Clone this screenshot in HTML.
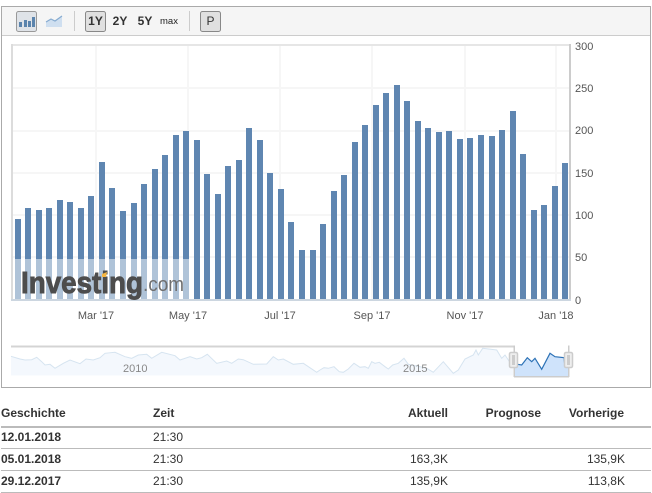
<!DOCTYPE html>
<html lang="de">
<head>
<meta charset="utf-8">
<title>Chart</title>
<style>
html,body{margin:0;padding:0;background:#fff;width:652px;height:493px;overflow:hidden}
svg{position:absolute;left:0;top:0;display:block}
text{font-family:"Liberation Sans",Arial,sans-serif}
.ax{font-size:11px;fill:#555}
.h{font-size:12px;font-weight:bold;fill:#333}
.d{font-size:12px;fill:#333}
.b{font-size:12px;font-weight:bold;fill:#333}
</style>
</head>
<body>
<svg width="652" height="493" viewBox="0 0 652 493" xmlns="http://www.w3.org/2000/svg">
<!-- frame -->
<rect x="1.5" y="6.5" width="649" height="381" fill="#fff" stroke="#aaa"/>
<rect x="2" y="7" width="648" height="28" fill="#f5f5f5"/>
<rect x="2" y="35" width="648" height="1" fill="#ccc"/>

<!-- toolbar -->
<rect x="16.5" y="11.5" width="20" height="20" rx="2" fill="#dfe3e8" stroke="#999"/>
<path d="M19 22h3v5h-3zM24 20h3v7h-3zM28 21h3v6h-3zM32 17h3v10h-3z" fill="#5b84ad"/>
<path d="M46 27v-5l5-3 4 2 7-5v11z" fill="#cfdff0"/>
<path d="M46 22l5-3 4 2 7-5" fill="none" stroke="#86abd0" stroke-width="1.2"/>
<rect x="74" y="11" width="1" height="20" fill="#ccc"/>
<rect x="85.5" y="11.5" width="20" height="20" rx="2" fill="#e0e0e0" stroke="#888"/>
<text x="95.5" y="25" text-anchor="middle" class="b">1Y</text>
<text x="120" y="25" text-anchor="middle" class="b">2Y</text>
<text x="145" y="25" text-anchor="middle" class="b">5Y</text>
<text x="169" y="24" text-anchor="middle" font-size="9.5" fill="#222">max</text>
<rect x="189" y="11" width="1" height="20" fill="#ccc"/>
<rect x="200.5" y="11.5" width="20" height="20" rx="2" fill="#e0e0e0" stroke="#888"/>
<text x="210.5" y="25" text-anchor="middle" class="d">P</text>

<!-- grid -->
<g fill="#f6f6f6">
<rect x="12" y="87" width="557" height="2"/><rect x="12" y="130" width="557" height="2"/>
<rect x="12" y="172" width="557" height="2"/><rect x="12" y="214" width="557" height="2"/>
<rect x="12" y="256" width="557" height="2"/>
<rect x="95" y="46" width="2" height="254"/><rect x="187" y="46" width="2" height="254"/>
<rect x="279" y="46" width="2" height="254"/><rect x="371" y="46" width="2" height="254"/>
<rect x="464" y="46" width="2" height="254"/><rect x="555" y="46" width="2" height="254"/>
</g>
<rect x="11" y="44" width="559" height="2" fill="#e6e6e6"/>
<rect x="11" y="44" width="2" height="257" fill="#dcdcdc"/>
<rect x="569" y="44" width="2" height="257" fill="#ccc"/>
<rect x="11" y="299" width="560" height="2" fill="#ccd6e0"/>

<!-- bars -->
<g fill="#5f86b1">
<rect x="15" y="219" width="6" height="80"/><rect x="25" y="208" width="6" height="91"/>
<rect x="36" y="210" width="6" height="89"/><rect x="46" y="208" width="6" height="91"/>
<rect x="57" y="200" width="6" height="99"/><rect x="67" y="202" width="6" height="97"/>
<rect x="78" y="208" width="6" height="91"/><rect x="88" y="196" width="6" height="103"/>
<rect x="99" y="162" width="6" height="137"/><rect x="109" y="188" width="6" height="111"/>
<rect x="120" y="211" width="6" height="88"/><rect x="131" y="203" width="6" height="96"/>
<rect x="141" y="184" width="6" height="115"/><rect x="152" y="169" width="6" height="130"/>
<rect x="162" y="155" width="6" height="144"/><rect x="173" y="135" width="6" height="164"/>
<rect x="183" y="131" width="6" height="168"/><rect x="194" y="140" width="6" height="159"/>
<rect x="204" y="174" width="6" height="125"/><rect x="215" y="194" width="6" height="105"/>
<rect x="225" y="166" width="6" height="133"/><rect x="236" y="160" width="6" height="139"/>
<rect x="246" y="128" width="6" height="171"/><rect x="257" y="140" width="6" height="159"/>
<rect x="267" y="173" width="6" height="126"/><rect x="278" y="189" width="6" height="110"/>
<rect x="288" y="222" width="6" height="77"/><rect x="299" y="250" width="6" height="49"/>
<rect x="310" y="250" width="6" height="49"/><rect x="320" y="224" width="6" height="75"/>
<rect x="331" y="191" width="6" height="108"/><rect x="341" y="175" width="6" height="124"/>
<rect x="352" y="142" width="6" height="157"/><rect x="362" y="125" width="6" height="174"/>
<rect x="373" y="105" width="6" height="194"/><rect x="383" y="93" width="6" height="206"/>
<rect x="394" y="85" width="6" height="214"/><rect x="404" y="101" width="6" height="198"/>
<rect x="415" y="121" width="6" height="178"/><rect x="425" y="128" width="6" height="171"/>
<rect x="436" y="132" width="6" height="167"/><rect x="446" y="131" width="6" height="168"/>
<rect x="457" y="139" width="6" height="160"/><rect x="467" y="138" width="6" height="161"/>
<rect x="478" y="135" width="6" height="164"/><rect x="489" y="136" width="6" height="163"/>
<rect x="499" y="130" width="6" height="169"/><rect x="510" y="111" width="6" height="188"/>
<rect x="520" y="154" width="6" height="145"/><rect x="531" y="210" width="6" height="89"/>
<rect x="541" y="205" width="6" height="94"/><rect x="552" y="186" width="6" height="113"/>
<rect x="562" y="163" width="6" height="136"/>
</g>

<!-- watermark -->
<rect x="13" y="259" width="176" height="40" fill="#fff" fill-opacity=".5"/>
<text x="21" y="293" font-size="31" font-weight="bold" fill="#4d4d4d" stroke="#4d4d4d" stroke-width=".9" textLength="122" lengthAdjust="spacingAndGlyphs">Investing</text>
<text x="143" y="291" font-size="20" fill="#6f6f6f" textLength="41" lengthAdjust="spacingAndGlyphs">.com</text>
<path d="M102 274l5-2-1 5-4 0z" fill="#f5b642"/>

<!-- y axis -->
<text class="ax" x="575" y="50">300</text><text class="ax" x="575" y="92">250</text>
<text class="ax" x="575" y="134">200</text><text class="ax" x="575" y="177">150</text>
<text class="ax" x="575" y="219">100</text><text class="ax" x="575" y="261">50</text>
<text class="ax" x="575" y="304">0</text>
<!-- x axis -->
<text class="ax" x="96" y="319" text-anchor="middle">Mar '17</text>
<text class="ax" x="188" y="319" text-anchor="middle">May '17</text>
<text class="ax" x="280" y="319" text-anchor="middle">Jul '17</text>
<text class="ax" x="372" y="319" text-anchor="middle">Sep '17</text>
<text class="ax" x="465" y="319" text-anchor="middle">Nov '17</text>
<text class="ax" x="556" y="319" text-anchor="middle">Jan '18</text>

<!-- navigator -->
<rect x="11" y="345.5" width="503" height="2" fill="#d4d4d4"/>
<path d="M11 356.3L20 359L25 360L31.7 359.7L36.7 357.3L41.7 361.7L45 365L50 364.3L55 368.3L63.3 363.3L70 360L80 363.7L86 359L93.3 360L100 357.7L105 353.3L115 352.3L125 356.7L131.7 358.3L138.3 355L146.7 354.3L151.7 358.3L161.7 352.3L175 355.7L180 360L190 356.7L196.7 359L201.7 357.7L207.3 354.3L216.7 363.3L226.7 361L231.7 363.3L238.3 359L243.3 359.7L253.3 364.3L266.7 364L273.3 356.7L278.3 360L283.3 359L293.3 364.3L303.3 363.3L316.7 372.3L320 370L324 367.7L328.3 368.3L334 366.7L339.3 371.7L343.3 372.3L348.3 369L354 363.3L360 367.3L365 366.7L368.3 368.3L371.7 361.7L375 363.3L379.3 362.3L385 366.7L388.3 369L392.7 365L398.3 363.3L404 358.3L408.3 364.3L420 366.7L426.7 368.3L433.3 372.3L443.3 361.7L453.3 373.3L458.3 370L465 359L473.3 355L476 350L478.3 355L482.7 348.3L496.7 350L501.7 358.3L505 355L513 367V375.5H11Z" fill="#f4f8fd"/>
<path d="M11 356.3L20 359L25 360L31.7 359.7L36.7 357.3L41.7 361.7L45 365L50 364.3L55 368.3L63.3 363.3L70 360L80 363.7L86 359L93.3 360L100 357.7L105 353.3L115 352.3L125 356.7L131.7 358.3L138.3 355L146.7 354.3L151.7 358.3L161.7 352.3L175 355.7L180 360L190 356.7L196.7 359L201.7 357.7L207.3 354.3L216.7 363.3L226.7 361L231.7 363.3L238.3 359L243.3 359.7L253.3 364.3L266.7 364L273.3 356.7L278.3 360L283.3 359L293.3 364.3L303.3 363.3L316.7 372.3L320 370L324 367.7L328.3 368.3L334 366.7L339.3 371.7L343.3 372.3L348.3 369L354 363.3L360 367.3L365 366.7L368.3 368.3L371.7 361.7L375 363.3L379.3 362.3L385 366.7L388.3 369L392.7 365L398.3 363.3L404 358.3L408.3 364.3L420 366.7L426.7 368.3L433.3 372.3L443.3 361.7L453.3 373.3L458.3 370L465 359L473.3 355L476 350L478.3 355L482.7 348.3L496.7 350L501.7 358.3L505 355L513 367" fill="none" stroke="#d6e4f0" stroke-width="1"/>
<text x="123" y="372" font-size="11" fill="#888">2010</text>
<text x="403" y="372" font-size="11" fill="#888">2015</text>
<path d="M514 364.3L517.3 364.3L521.7 365L527.3 357.7L531.7 361.7L535 358.3L541.7 369.3L550 353.3L555 356.7L564 357.7L569 367V376H514Z" fill="#cfe3fb"/>
<path d="M517.3 364.3L521.7 365L527.3 357.7L531.7 361.7L535 358.3L541.7 369.3L550 353.3L555 356.7L564 357.7L565 367" fill="none" stroke="#2d72b6" stroke-width="1.2"/>
<rect x="513.5" y="345.5" width="1.5" height="31.5" fill="#ccc"/>
<rect x="568" y="345.5" width="1.5" height="31.5" fill="#ccc"/>
<rect x="514" y="376" width="55" height="1.5" fill="#ccc"/>
<rect x="509.5" y="352.5" width="8" height="15" rx="1.5" fill="#eee" stroke="#ccc" stroke-width="1.5"/>
<rect x="512" y="355" width="3" height="10" fill="#ccc"/>
<rect x="564.5" y="352.5" width="8" height="15" rx="1.5" fill="#eee" stroke="#ccc" stroke-width="1.5"/>
<rect x="567" y="355" width="3" height="10" fill="#ccc"/>

<!-- table -->
<text class="h" x="1" y="417">Geschichte</text>
<text class="h" x="153" y="417">Zeit</text>
<text class="h" x="448" y="417" text-anchor="end">Aktuell</text>
<text class="h" x="541" y="417" text-anchor="end">Prognose</text>
<text class="h" x="624" y="417" text-anchor="end">Vorherige</text>
<rect x="1" y="426" width="650" height="2" fill="#bbb"/>
<text class="b" x="1" y="441">12.01.2018</text>
<text class="d" x="153" y="441">21:30</text>
<rect x="1" y="448" width="650" height="1" fill="#bbb"/>
<text class="b" x="1" y="463">05.01.2018</text>
<text class="d" x="153" y="463">21:30</text>
<text class="d" x="448" y="463" text-anchor="end">163,3K</text>
<text class="d" x="625" y="463" text-anchor="end">135,9K</text>
<rect x="1" y="470" width="650" height="1" fill="#bbb"/>
<text class="b" x="1" y="485">29.12.2017</text>
<text class="d" x="153" y="485">21:30</text>
<text class="d" x="448" y="485" text-anchor="end">135,9K</text>
<text class="d" x="625" y="485" text-anchor="end">113,8K</text>
<rect x="1" y="492" width="650" height="1" fill="#bbb"/>
</svg>
</body>
</html>
